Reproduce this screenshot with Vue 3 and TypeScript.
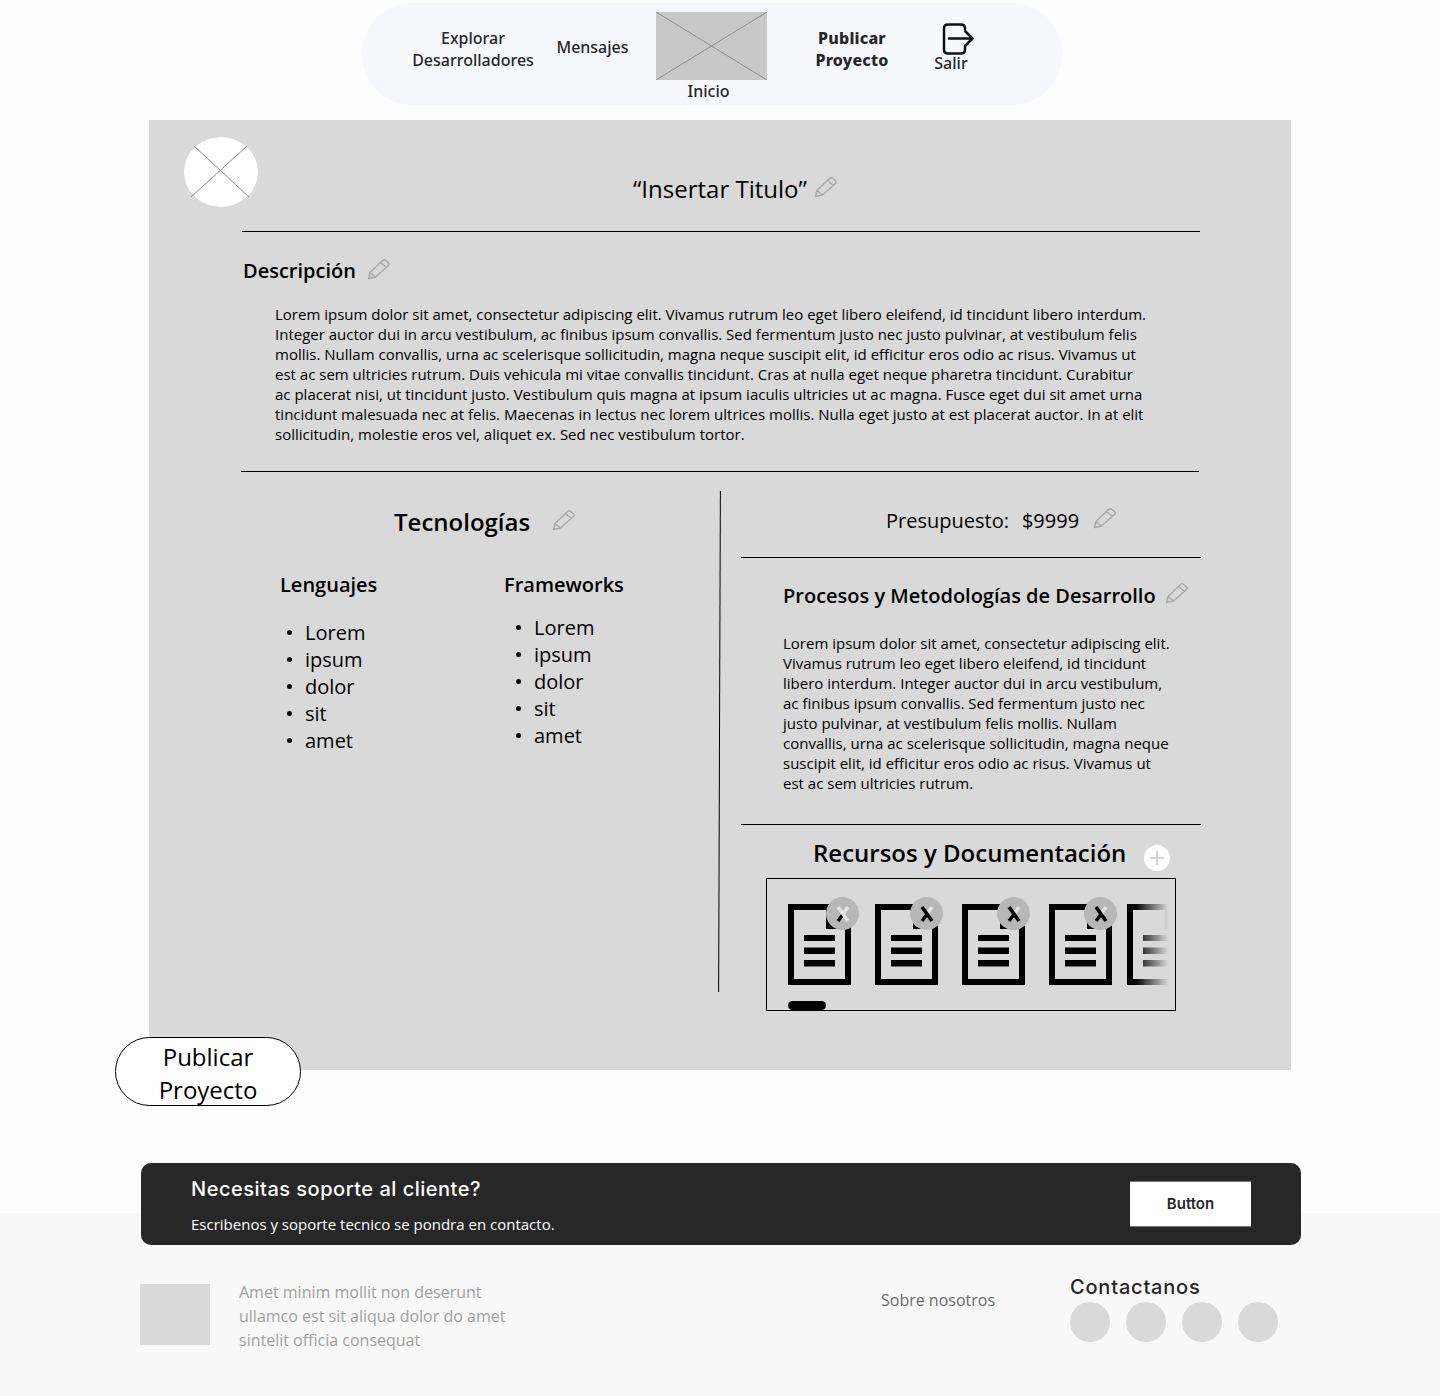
<script setup lang="ts">
const listItems: string[] = ['Lorem', 'ipsum', 'dolor', 'sit', 'amet']
const docs: number[] = [1, 2, 3, 4, 5]
const socials: number[] = [1, 2, 3, 4]
</script>

<template>
  <div class="page">
    <nav class="nav">
      <a class="nav-item explore">Explorar<br />Desarrolladores</a>
      <a class="nav-item messages">Mensajes</a>
      <div class="home">
        <svg class="home-img" width="111" height="68" viewBox="0 0 111 68">
          <rect width="111" height="68" fill="#c8c8c8" />
          <path d="M0 0L111 68M111 0L0 68" stroke="#8c8c8c" stroke-width="1" />
        </svg>
        <span class="nav-item inicio">Inicio</span>
      </div>
      <a class="nav-item publish-link">Publicar<br />Proyecto</a>
      <div class="logout">
        <svg width="32" height="32" viewBox="0 0 32 32" fill="none" stroke="#111" stroke-width="2.500" stroke-linecap="round" stroke-linejoin="round">
          <path d="M23 6.500V5.500Q23 1.500 19 1.500H6Q2 1.500 2 5.500V26.500Q2 30.500 6 30.500H19Q23 30.500 23 26.500V23" />
          <path d="M7 15.500H30.500M23.500 8.500L30.500 15.500L23.500 22.500" />
        </svg>
        <span class="nav-item">Salir</span>
      </div>
    </nav>

    <main class="card">
      <svg class="avatar" width="74" height="70" viewBox="0 0 74 70">
        <ellipse cx="37" cy="35" rx="37" ry="35" fill="#fff" />
        <path d="M10 9L65 60M63 9L7 60" stroke="#8a8a8a" stroke-width="1" />
      </svg>

      <div class="title-row">
        <h1 class="title">“Insertar Titulo”</h1>
        <svg class="pencil" width="24" height="22" viewBox="0 0 24 22"><path d="M1.500 20.500L3 14.500L15.500 2.500Q17 1.200 18.500 2.200L21.500 4.800Q22.800 6.200 21.500 7.500L8.500 19ZM3 14.500L8.500 19M13.500 4.500L19.500 9.500" /></svg>
      </div>
      <hr class="rule rule-top" />

      <div class="desc-head">
        <h2 class="section">Descripción</h2>
        <svg class="pencil" width="24" height="22" viewBox="0 0 24 22"><path d="M1.500 20.500L3 14.500L15.500 2.500Q17 1.200 18.500 2.200L21.500 4.800Q22.800 6.200 21.500 7.500L8.500 19ZM3 14.500L8.500 19M13.500 4.500L19.500 9.500" /></svg>
      </div>
      <p class="body-text desc">Lorem ipsum dolor sit amet, consectetur adipiscing elit. Vivamus rutrum leo eget libero eleifend, id tincidunt libero interdum.<br />Integer auctor dui in arcu vestibulum, ac finibus ipsum convallis. Sed fermentum justo nec justo pulvinar, at vestibulum felis<br />mollis. Nullam convallis, urna ac scelerisque sollicitudin, magna neque suscipit elit, id efficitur eros odio ac risus. Vivamus ut<br />est ac sem ultricies rutrum. Duis vehicula mi vitae convallis tincidunt. Cras at nulla eget neque pharetra tincidunt. Curabitur<br />ac placerat nisi, ut tincidunt justo. Vestibulum quis magna at ipsum iaculis ultricies ut ac magna. Fusce eget dui sit amet urna<br />tincidunt malesuada nec at felis. Maecenas in lectus nec lorem ultrices mollis. Nulla eget justo at est placerat auctor. In at elit<br />sollicitudin, molestie eros vel, aliquet ex. Sed nec vestibulum tortor.</p>
      <hr class="rule rule-mid" />

      <div class="columns">
        <section class="left">
          <div class="tech-head">
            <h2 class="heading">Tecnologías</h2>
            <svg class="pencil" width="24" height="22" viewBox="0 0 24 22"><path d="M1.500 20.500L3 14.500L15.500 2.500Q17 1.200 18.500 2.200L21.500 4.800Q22.800 6.200 21.500 7.500L8.500 19ZM3 14.500L8.500 19M13.500 4.500L19.500 9.500" /></svg>
          </div>
          <div class="tech-cols">
            <div class="tech-a">
              <h3 class="section">Lenguajes</h3>
              <ul class="list">
                <li v-for="item in listItems" :key="item">{{ item }}</li>
              </ul>
            </div>
            <div class="tech-b">
              <h3 class="section">Frameworks</h3>
              <ul class="list">
                <li v-for="item in listItems" :key="item">{{ item }}</li>
              </ul>
            </div>
          </div>
        </section>

        <div class="divider"></div>

        <section class="right">
          <div class="budget">
            <span>Presupuesto:</span>
            <span class="amount">$9999</span>
            <svg class="pencil" width="24" height="22" viewBox="0 0 24 22"><path d="M1.500 20.500L3 14.500L15.500 2.500Q17 1.200 18.500 2.200L21.500 4.800Q22.800 6.200 21.500 7.500L8.500 19ZM3 14.500L8.500 19M13.500 4.500L19.500 9.500" /></svg>
          </div>
          <hr class="rule-right" />
          <div class="process-head">
            <h2 class="section">Procesos y Metodologías de Desarrollo</h2>
            <svg class="pencil" width="24" height="22" viewBox="0 0 24 22"><path d="M1.500 20.500L3 14.500L15.500 2.500Q17 1.200 18.500 2.200L21.500 4.800Q22.800 6.200 21.500 7.500L8.500 19ZM3 14.500L8.500 19M13.500 4.500L19.500 9.500" /></svg>
          </div>
          <p class="body-text process">Lorem ipsum dolor sit amet, consectetur adipiscing elit.<br />Vivamus rutrum leo eget libero eleifend, id tincidunt<br />libero interdum. Integer auctor dui in arcu vestibulum,<br />ac finibus ipsum convallis. Sed fermentum justo nec<br />justo pulvinar, at vestibulum felis mollis. Nullam<br />convallis, urna ac scelerisque sollicitudin, magna neque<br />suscipit elit, id efficitur eros odio ac risus. Vivamus ut<br />est ac sem ultricies rutrum.</p>
          <hr class="rule-right" />
          <div class="res-head">
            <h2 class="heading">Recursos y Documentación</h2>
            <span class="add">
              <svg width="14" height="14" viewBox="0 0 14 14"><path d="M7 0V14M0 7H14" stroke="#d4d4d4" stroke-width="2" /></svg>
            </span>
          </div>
          <div class="res-box">
            <div class="doc-row">
              <div v-for="d in docs" :key="d" class="doc">
                <svg width="63" height="81" viewBox="0 0 63 81">
                  <path fill="#000" fill-rule="evenodd" d="M0 0H63V81H0ZM6 6V75H57V25H38V6Z" />
                  <path fill="#000" d="M16 31H47V37H16ZM16 43.500H47V50H16ZM16 56H47V62.500H16Z" />
                </svg>
                <span v-if="d < 5" class="remove">
                  <svg width="16" height="18" viewBox="0 0 16 18" fill="none" stroke-width="3.600">
                    <path d="M13 2L3 16" stroke="#e2e2e2" />
                    <path d="M7.500 10L3 16" stroke="#000" />
                    <path d="M3 2L13 16" :stroke="d === 1 ? '#e2e2e2' : '#000'" />
                  </svg>
                </span>
              </div>
            </div>
            <span class="scroll-thumb"></span>
          </div>
        </section>
      </div>
    </main>

    <button class="publish-btn">Publicar Proyecto</button>

    <footer class="footer">
      <div class="banner">
        <div>
          <h2 class="banner-title">Necesitas soporte al cliente?</h2>
          <p class="banner-sub">Escribenos y soporte tecnico se pondra en contacto.</p>
        </div>
        <button class="banner-btn">Button</button>
      </div>
      <div class="foot-row">
        <div class="foot-logo"></div>
        <p class="foot-text">Amet minim mollit non deserunt<br />ullamco est sit aliqua dolor do amet<br />sintelit officia consequat</p>
        <a class="foot-link">Sobre nosotros</a>
        <div class="contact">
          <h3 class="contact-title">Contactanos</h3>
          <div class="socials">
            <span v-for="s in socials" :key="s" class="social"></span>
          </div>
        </div>
      </div>
    </footer>
  </div>
</template>

<style scoped>
.page {
  width: 1440px;
  height: 1396px;
  overflow: hidden;
  background: #fdfdfd;
  font-family: "Open Sans", "Liberation Sans", sans-serif;
  color: #000;
  display: flex;
  flex-direction: column;
}
h1, h2, h3, p, ul { margin: 0; padding: 0; font-weight: inherit; font-size: inherit; }
hr { margin: 0; border: 0; height: 1px; background: #000; }

/* NAV */
.nav {
  width: 700px;
  height: 102px;
  margin: 3px 0 0 362px;
  padding-left: 49px;
  box-sizing: border-box;
  background: #f7f8fc;
  border-radius: 50px;
  display: flex;
  align-items: flex-start;
  flex: none;
}
.nav-item {
  font-family: "Noto Sans", "Open Sans", sans-serif;
  font-size: 16px;
  line-height: 22px;
  font-weight: 500;
  color: #262626;
  text-align: center;
  display: block;
  white-space: nowrap;
}
.explore { margin-top: 24px; width: 124px; flex: none; }
.messages { margin: 33px 0 0 21px; width: 73px; flex: none; }
.home { margin: 9px 0 0 27px; display: flex; flex-direction: column; align-items: center; width: 111px; flex: none; }
.home-img { display: block; }
.inicio { margin-right: 6px; }
.publish-link { margin: 24px 0 0 48px; font-weight: 800; width: 74px; flex: none; letter-spacing: 0.2px; }
.logout { margin: 20px 0 0 45px; width: 34px; flex: none; display: flex; flex-direction: column; align-items: center; }
.logout svg { margin-left: 14px; flex: none; }
.logout .nav-item { margin-top: -3px; }

/* CARD */
.card {
  position: relative;
  flex: none;
  width: 1142px;
  height: 950px;
  margin: 15px 0 0 149px;
  background: #d9d9d9;
  padding-top: 52px;
  box-sizing: border-box;
}
.avatar { position: absolute; left: 35px; top: 17px; }
.pencil { display: block; flex: none; fill: none; stroke: #a8a8a8; stroke-width: 1.5; stroke-linejoin: round; }
.title-row { display: flex; align-items: center; margin-left: 484px; height: 34px; gap: 7px; }
.title { font-size: 24px; line-height: 34px; font-weight: 400; white-space: nowrap; }
.title-row .pencil { margin-top: -5px; }
.rule { width: 958px; }
.rule-top { margin: 25px 0 0 93px; }
.desc-head { display: flex; align-items: center; margin: 24px 0 0 94px; height: 30px; gap: 11px; }
.desc-head .pencil { margin-top: -5px; }
.section { font-size: 20px; line-height: 30px; font-weight: 600; white-space: nowrap; }
.body-text { font-size: 15px; line-height: 20px; color: #000; white-space: nowrap; }
.desc { margin: 18px 0 0 126px; }
.rule-mid { margin: 27px 0 0 92px; }

.columns { display: flex; margin: 19px 0 0 92px; height: 501px; }
.left { width: 478px; flex: none; }
.divider { width: 1px; flex: none; background: #000; transform: rotate(0.2deg); }
.tech-head { display: flex; align-items: center; margin: 14px 0 0 153px; height: 34px; gap: 22px; }
.heading { font-size: 24px; line-height: 34px; font-weight: 600; white-space: nowrap; }
.tech-head .pencil { margin-top: -4px; }
.tech-cols { display: flex; margin: 31px 0 0 39px; }
.tech-a { width: 224px; flex: none; }
.list { list-style: none; font-size: 20px; line-height: 27px; margin-top: 19px; }
.list li { position: relative; }
.list li::before {
  content: "";
  position: absolute;
  width: 5px;
  height: 5px;
  border-radius: 50%;
  background: #000;
  top: 11px;
  left: -18px;
}
.tech-a .list { padding-left: 25px; }
.tech-b .list { padding-left: 30px; margin-top: 14px; }

.right { padding-left: 21px; flex: 1; min-width: 0; }
.budget { display: flex; align-items: center; font-size: 20px; line-height: 30px; height: 30px; margin: 15px 0 0 145px; white-space: nowrap; }
.amount { margin-left: 13px; }
.budget .pencil { margin: -7px 0 0 14px; }
.rule-right { width: 460px; }
.budget + .rule-right { margin-top: 21px; }
.process-head { display: flex; align-items: center; margin: 23px 0 0 42px; height: 30px; gap: 9px; }
.process-head .pencil { margin-top: -6px; }
.process { margin-top: 22px; margin-left: 42px; }
.process + .rule-right { margin-top: 31px; }
.res-head { display: flex; margin: 11px 0 0 72px; height: 34px; align-items: center; gap: 18px; }
.add { width: 26px; height: 26px; border-radius: 50%; background: #fff; display: flex; align-items: center; justify-content: center; margin-top: 10px; }
.res-box {
  position: relative;
  box-sizing: border-box;
  width: 410px;
  height: 133px;
  margin: 8px 0 0 25px;
  border: 1px solid #000;
  padding: 25px 0 0 21px;
}
.doc-row { display: flex; gap: 24px; width: 380px; }
.doc { position: relative; flex: none; width: 63px; height: 81px; }
.doc svg { display: block; }
.doc:last-child {
  margin-left: -9px;
  -webkit-mask-image: linear-gradient(to right, #000 0, #000 8px, transparent 41px);
  mask-image: linear-gradient(to right, #000 0, #000 8px, transparent 41px);
}
.remove {
  position: absolute;
  left: 38px;
  top: -7px;
  width: 33px;
  height: 33px;
  border-radius: 50%;
  background: #b7b7b7;
  display: flex;
  align-items: center;
  justify-content: center;
}
.doc:nth-child(n+2) .remove { left: 35px; }
.scroll-thumb {
  position: absolute;
  left: 21px;
  bottom: 0;
  width: 38px;
  height: 9px;
  border-radius: 5px;
  background: #000;
}

/* PUBLISH */
.publish-btn {
  flex: none;
  box-sizing: border-box;
  width: 186px;
  height: 69px;
  margin: -33px 0 0 115px;
  padding: 2px 20px 0;
  position: relative;
  background: #fff;
  border: 1px solid #000;
  border-radius: 35px;
  font-family: inherit;
  font-size: 24px;
  line-height: 33px;
  color: #000;
}

/* FOOTER */
.footer {
  position: relative;
  flex: 1;
  margin-top: 107px;
  background: #f8f8f8;
}
.banner {
  position: relative;
  box-sizing: border-box;
  width: 1160px;
  height: 82px;
  margin: -50px 0 0 141px;
  padding: 0 50px;
  background: #272727;
  border-radius: 10px;
  color: #fff;
  display: flex;
  align-items: center;
  justify-content: space-between;
}
.banner-title { font-family: Inter, "Open Sans", sans-serif; font-size: 20px; line-height: 30px; font-weight: 500; letter-spacing: 0.5px; margin-top: -1px; }
.banner-sub { font-size: 15px; line-height: 20px; margin-top: 10px; }
.banner-btn {
  box-sizing: border-box;
  width: 121px;
  height: 46px;
  padding-bottom: 2px;
  background: #fff;
  border: 0;
  border-top: 1px solid #777;
  border-bottom: 1px solid #777;
  font-family: Inter, sans-serif;
  font-size: 15px;
  font-weight: 600;
  color: #272727;
}
.foot-row { display: flex; align-items: flex-start; padding: 29px 0 0 140px; }
.foot-logo { width: 70px; height: 61px; margin-top: 10px; background: #d9d9d9; flex: none; }
.foot-text { margin: 6px 0 0 29px; width: 642px; flex: none; font-size: 16px; line-height: 24px; color: #a0a0a0; }
.foot-link { margin-top: 14px; width: 189px; flex: none; font-size: 16px; line-height: 24px; color: #6b6b6b; }
.contact-title { font-family: Inter, sans-serif; font-size: 20px; line-height: 30px; font-weight: 500; letter-spacing: 0.8px; color: #262626; margin-top: -2px; }
.socials { display: flex; gap: 16px; }
.social { width: 40px; height: 40px; border-radius: 50%; background: #d9d9d9; }
</style>
